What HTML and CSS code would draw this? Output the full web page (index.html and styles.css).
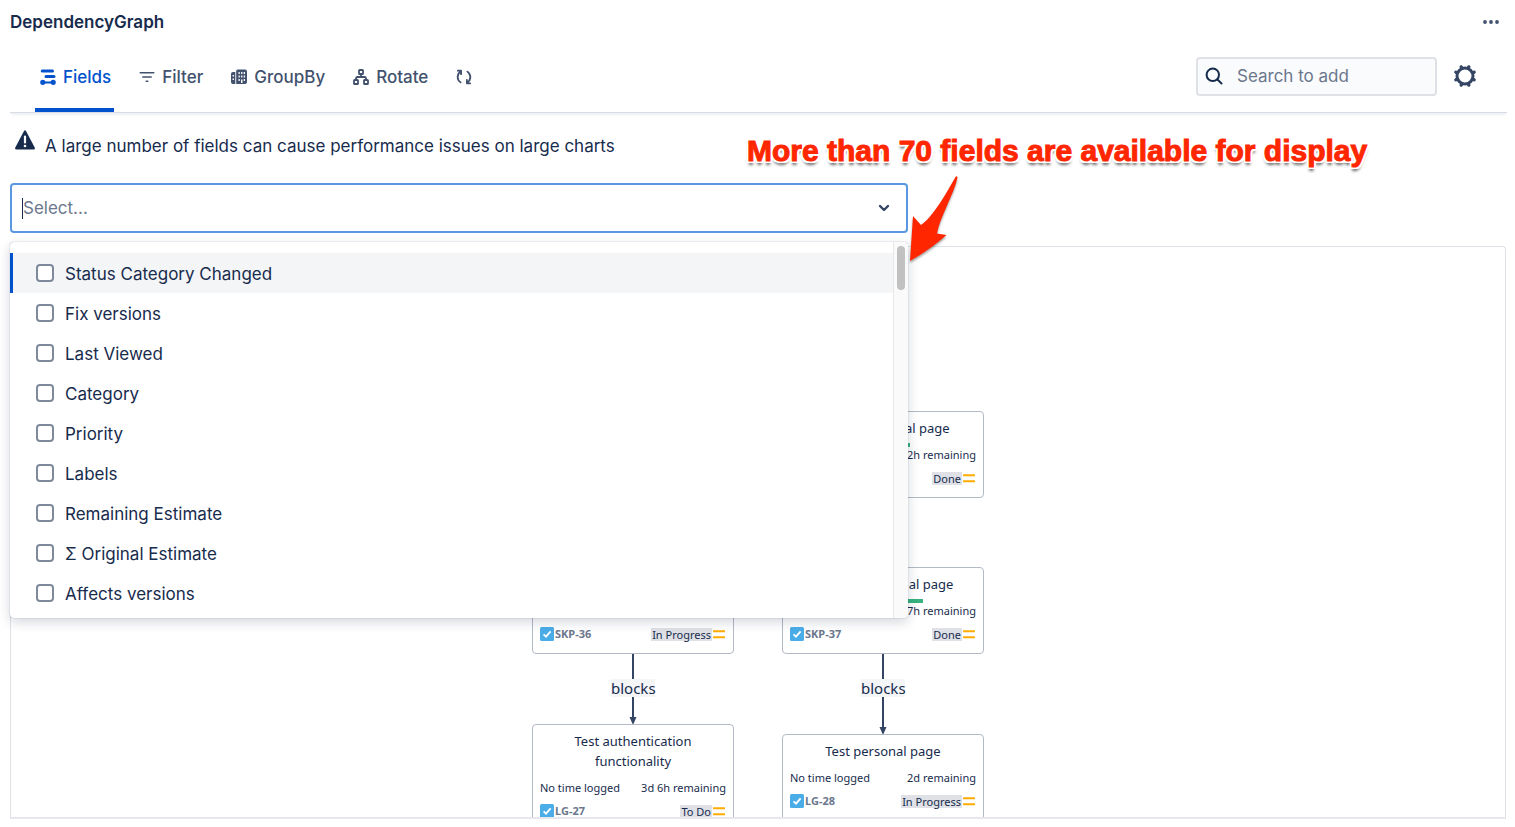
FILE: index.html
```html
<!DOCTYPE html>
<html lang="en">
<head>
<meta charset="utf-8">
<title>DependencyGraph</title>
<link rel="stylesheet" href="styles.css">
</head>
<body>
<svg class="sprite" aria-hidden="true">
  <symbol id="task" viewBox="0 0 14 14"><rect width="14" height="14" rx="1.5" fill="#4bade8"/><path d="M3.6 7.3 6 9.7l4.6-5.4" fill="none" stroke="#fff" stroke-width="1.8"/></symbol>
  <symbol id="medium" viewBox="0 0 12 9"><path d="M.8 1.2h10.4M.8 7.2h10.4" stroke="#ffab00" stroke-width="2" stroke-linecap="round"/></symbol>
</svg>
<header class="titlebar">
  <h1 class="title">DependencyGraph</h1>
  <button class="icon-button" aria-label="More actions"><svg width="16" height="4" viewBox="0 0 16 4" fill="#42526e"><circle cx="2" cy="2" r="1.9"/><circle cx="8" cy="2" r="1.9"/><circle cx="14" cy="2" r="1.9"/></svg></button>
</header>
<div class="toolbar">
  <nav class="tabs" aria-label="Graph options">
    <button class="tab tab-active"><svg width="16" height="16" viewBox="0 0 16 16" fill="none" stroke="currentColor" stroke-width="3" stroke-linecap="round"><path d="M2.200 2h10.300M6 7.600h8"/><path d="M3 13.500h10" stroke-width="1.800"/><circle cx="2.800" cy="13.300" r="1.500" stroke-width="2.200"/><circle cx="13.200" cy="13.300" r="1.500" stroke-width="2.200"/></svg>Fields</button>
    <button class="tab"><svg width="16" height="16" viewBox="0 0 16 16" fill="none" stroke="currentColor" stroke-width="1.500" stroke-linecap="round"><path d="M1.200 3.800h13.600M3.800 8h8.400M7.200 12.200h1.600"/></svg>Filter</button>
    <button class="tab"><svg width="16" height="16" viewBox="0 0 16 16"><path fill="currentColor" fill-rule="evenodd" d="M0 5q0-2 2-2h2.300v12H2q-2 0-2-2zM5.200 2q0-1.500 1.500-1.500H14q2 0 2 2V13q0 2-2 2H5.200zM7.500 3v2h1.300V3zm2.600 0v2h1.300V3zm2.600 0v2H14V3zM7.500 6.500v2h1.300v-2zm2.600 0v2h1.300v-2zm2.600 0v2H14v-2zM7.500 10v2h1.300v-2zm5.200 0v2H14v-2zM10 10.500V14h1.500v-3.500zM1.600 6v1.500H3V6zm0 3.500V11H3V9.500z"/></svg>GroupBy</button>
    <button class="tab"><svg width="16" height="16" viewBox="0 0 16 16" fill="none" stroke="currentColor" stroke-width="1.800"><rect x="6" y="1" width="4" height="4" rx=".6"/><rect x="1" y="11" width="4" height="4" rx=".6"/><rect x="11" y="11" width="4" height="4" rx=".6"/><path d="M8 5v3M3 11V9.500Q3 8 4.500 8h7Q13 8 13 9.500V11"/></svg>Rotate</button>
    <button class="tab" aria-label="Refresh"><svg width="16" height="16" viewBox="0 0 16 16" fill="none" stroke="currentColor" stroke-width="1.800" stroke-linecap="round" stroke-linejoin="round"><path d="M4.600 13.400C.7 10.500.6 5.500 4.700 2.400M1.800 1.700h3.300v3.500M11.400 2.600c3.900 2.900 4 7.900-.1 11M14.200 14.300h-3.300v-3.500"/></svg></button>
  </nav>
  <div class="tools">
    <label class="search"><svg width="18" height="18" viewBox="0 0 18 18" fill="none" stroke="#172b4d" stroke-width="2" stroke-linecap="round"><circle cx="7.800" cy="7.800" r="6.200"/><path d="m12.500 12.500 4 4"/></svg><input type="text" placeholder="Search to add" aria-label="Search to add"></label>
    <button class="icon-button" aria-label="Settings"><svg width="24" height="24" viewBox="0 0 24 24" fill="none" stroke="#344563"><circle cx="12" cy="12" r="8" stroke-width="3"/><path d="m15.800 2.900-.4.900M8.200 2.900l.4.900M2.900 8.200l.9.400M2.900 15.800l.9-.4M8.200 21.100l.4-.9M15.800 21.100l-.4-.9M21.100 15.800l-.9-.4M21.100 8.200l-.9.400" stroke-width="3.400" stroke-linecap="round"/></svg></button>
  </div>
</div>
<main class="content">
  <p class="warning"><svg width="20" height="20" viewBox="0 0 20 20"><path d="M9 1q1-1.600 2 0l8.700 16.500q.8 2-1.200 2h-17q-2 0-1.200-2z" fill="#172b4d"/><path d="M10 6.500v6" stroke="#fff" stroke-width="2.200" stroke-linecap="round"/><circle cx="10" cy="16" r="1.300" fill="#fff"/></svg><span>A large number of fields can cause performance issues on large charts</span></p>
  <div class="picker">
    <div class="select">
      <span class="caret"></span>
      <input type="text" placeholder="Select..." aria-label="Select fields">
      <svg width="12" height="8" viewBox="0 0 12 8" fill="none" stroke="#344563" stroke-width="2.400" stroke-linecap="round" stroke-linejoin="round"><path d="m2 2 4 4 4-4"/></svg>
    </div>
    <div class="menu">
      <div class="options">
        <label class="option option-focused"><input type="checkbox">Status Category Changed</label>
        <label class="option"><input type="checkbox">Fix versions</label>
        <label class="option"><input type="checkbox">Last Viewed</label>
        <label class="option"><input type="checkbox">Category</label>
        <label class="option"><input type="checkbox">Priority</label>
        <label class="option"><input type="checkbox">Labels</label>
        <label class="option"><input type="checkbox">Remaining Estimate</label>
        <label class="option"><input type="checkbox">Σ Original Estimate</label>
        <label class="option"><input type="checkbox">Affects versions</label>
      </div>
      <div class="track"><div class="thumb"></div></div>
    </div>
    <div class="callout">More than 70 fields are available for display</div>
    <svg class="arrow" width="44" height="92" viewBox="0 0 44 92"><path d="M48.500 3q1.500-1.500 2 .5C47 20 33 43 30 59.500L39.500 61Q24 75 3 87L6 42l8 9C26 43 40 18 48.500 3z" fill="#ff2600"/></svg>
  </div>
  <section class="graph" aria-label="Dependency graph">
    <div class="canvas">
      <svg class="edges" width="452" height="580" viewBox="0 0 452 580" fill="#344563"><path d="M100 406h2v64h-2zM97.500 470h7l-3.500 8zM350 406h2v74h-2zM347.500 480h7l-3.500 8z"/></svg>
      <span class="edge-label edge-left">blocks</span>
      <span class="edge-label edge-right">blocks</span>
      <article class="node node-design">
        <h2>Design personal page</h2>
        <div class="progress"><i></i></div>
        <p class="row"><span>6h logged</span><span>2h remaining</span></p>
        <p class="row"><span class="key"><svg width="14" height="14"><use href="#task"/></svg>SKP-35</span><span class="state"><b>Done</b><svg width="12" height="9"><use href="#medium"/></svg></span></p>
      </article>
      <article class="node node-auth">
        <h2>Authentication</h2>
        <div class="progress"><i></i></div>
        <p class="row"><span>4h logged</span><span>6h remaining</span></p>
        <p class="row"><span class="key"><svg width="14" height="14"><use href="#task"/></svg>SKP-36</span><span class="state"><b>In Progress</b><svg width="12" height="9"><use href="#medium"/></svg></span></p>
      </article>
      <article class="node node-personal">
        <h2>Develop personal page</h2>
        <div class="progress progress-wide"><i></i></div>
        <p class="row"><span>2d 4h logged</span><span>7h remaining</span></p>
        <p class="row"><span class="key"><svg width="14" height="14"><use href="#task"/></svg>SKP-37</span><span class="state"><b>Done</b><svg width="12" height="9"><use href="#medium"/></svg></span></p>
      </article>
      <article class="node node-test-auth">
        <h2>Test authentication functionality</h2>
        <div class="progress"></div>
        <p class="row"><span>No time logged</span><span>3d 6h remaining</span></p>
        <p class="row"><span class="key"><svg width="14" height="14"><use href="#task"/></svg>LG-27</span><span class="state"><b>To Do</b><svg width="12" height="9"><use href="#medium"/></svg></span></p>
      </article>
      <article class="node node-test-personal">
        <h2>Test personal page</h2>
        <div class="progress"></div>
        <p class="row"><span>No time logged</span><span>2d remaining</span></p>
        <p class="row"><span class="key"><svg width="14" height="14"><use href="#task"/></svg>LG-28</span><span class="state"><b>In Progress</b><svg width="12" height="9"><use href="#medium"/></svg></span></p>
      </article>
    </div>
  </section>
</main>
</body>
</html>
```
FILE: styles.css
```css
* { box-sizing: border-box; }
body {
  margin: 0;
  padding: 0 8px 8px 10px;
  height: 100vh;
  display: flex;
  flex-direction: column;
  overflow: hidden;
  background: #fff;
  color: #172b4d;
  font: 17px/24px Inter, "Noto Sans", sans-serif;
}
h1, h2, p { margin: 0; }
button, input { font: inherit; color: inherit; }
button { border: 0; padding: 0; background: none; }
svg { display: block; flex: none; }
.sprite { position: absolute; width: 0; height: 0; }

.titlebar { display: flex; justify-content: space-between; align-items: center; padding: 10px 8px 8px 0; }
.title { font-size: 17px; font-weight: 600; line-height: 24px; }
.icon-button { display: flex; }

.toolbar {
  display: flex;
  justify-content: space-between;
  height: 71px;
  padding: 0 30px 0 25px;
  border-bottom: 1px solid #d8dbe3;
  box-shadow: 0 3px 2px -1px #eeeff3;
}
.tabs { display: flex; gap: 20px; }
.tab {
  display: flex;
  align-items: center;
  gap: 7px;
  padding: 4px 3px 0 5px;
  border-bottom: 4px solid transparent;
  color: #42526e;
  font-weight: 500;
}
.tab-active { color: #0052cc; border-color: #0052cc; }
.tools { display: flex; align-items: center; gap: 16px; padding-bottom: 2px; }
.search {
  display: flex;
  align-items: center;
  gap: 14px;
  width: 241px;
  height: 39px;
  padding: 0 7px;
  border: 2px solid #dfe1e6;
  border-radius: 4px;
  background: #fafbfc;
}
.search input, .select input { flex: 1; min-width: 0; border: 0; padding: 0; background: none; outline: 0; }
input::placeholder { color: #6b778c; opacity: 1; }

.content { flex: 1; min-height: 0; display: flex; flex-direction: column; }
.warning { display: flex; align-items: flex-start; gap: 10px; padding: 17px 0 25px 5px; }
.warning span { padding-top: 4px; }

.picker { position: relative; z-index: 1; width: 60%; margin-bottom: 13px; }
.select {
  display: flex;
  align-items: center;
  height: 50px;
  padding: 0 16px 0 10px;
  border: 2px solid #5a97e2;
  border-radius: 4px;
  background: #fff;
}
.caret { width: 1px; height: 21px; background: #172b4d; }
.menu {
  position: absolute;
  top: 59px;
  left: 0;
  right: 0;
  display: flex;
  border-radius: 4px;
  background: #fff;
  box-shadow: 0 0 1px rgba(9, 30, 66, .5), 0 4px 12px rgba(9, 30, 66, .18);
  overflow: hidden;
}
.options { flex: 1; padding: 11px 0 5px; }
.option { display: flex; align-items: center; gap: 11px; height: 40px; padding: 2px 0 0 23px; border-left: 3px solid transparent; }
.option-focused { background: #f4f5f7; border-color: #0052cc; }
.option input {
  appearance: none;
  width: 18px;
  height: 18px;
  margin: 0 0 2px;
  border: 2px solid #7f899c;
  border-radius: 4px;
  background: #fff;
}
.track { width: 15px; padding: 4px 3px; border-left: 1px solid #e8e8e8; background: #fafafa; }
.thumb { height: 44px; border-radius: 4px; background: #c1c1c1; }

.callout {
  position: absolute;
  left: 737px;
  top: -49px;
  white-space: nowrap;
  color: #ff2600;
  font: bold 30px/34px "Liberation Sans", Arial, sans-serif;
  -webkit-text-stroke: 1px #ff2600;
  text-shadow: 2px 0 #fff, -2px 0 #fff, 0 2px #fff, 0 -2px #fff, 2px 2px #fff, -2px 2px #fff, 2px -2px #fff, -2px -2px #fff, 0 4px 3px rgba(0, 0, 0, .6);
}
.arrow { position: absolute; left: 897px; top: -9px; overflow: visible; filter: drop-shadow(0 2px 1px rgba(0, 0, 0, .35)); }

.graph {
  flex: 1;
  min-height: 0;
  position: relative;
  overflow: hidden;
  margin-right: 1px;
  border: 1px solid #dfe1e6;
  border-bottom: 2px solid #e7e8ee;
  border-radius: 4px 4px 0 0;
  font-family: "Noto Sans", sans-serif;
}
.canvas { position: absolute; top: 0; left: 50%; width: 452px; margin-left: -226px; }
.edges { position: absolute; top: 0; left: 0; }
.edge-label { position: absolute; top: 432px; width: 44px; margin-left: -22px; text-align: center; background: #f4f5f7; font-size: 15px; line-height: 18px; }
.edge-left { left: 101px; }
.edge-right { left: 351px; }
.node {
  position: absolute;
  width: 202px;
  height: 87px;
  padding: 6px 7px 0;
  border: 1px solid #b3bac5;
  border-radius: 4px;
  background: #fff;
  font-size: 11px;
  line-height: 16px;
}
.node h2 { font-size: 13px; line-height: 20px; font-weight: 400; text-align: center; padding: 0 20px; }
.progress { height: 9px; padding-top: 5px; }
.progress i { display: block; width: 120px; height: 4px; background: #36b37e; }
.progress-wide i { width: 133px; }
.row { display: flex; justify-content: space-between; margin-bottom: 7px; }
.key, .state { display: flex; align-items: center; gap: 1px; }
.key { color: #6b778c; font-weight: 700; }
.state { padding-right: 1px; }
.state b { font-weight: 400; line-height: 13px; padding: 0 1px; background: #dfe1e6; }
.node-design { left: 250px; top: 164px; }
.node-auth { left: 0; top: 320px; }
.node-personal { left: 250px; top: 320px; }
.node-test-auth { left: 0; top: 477px; height: 106px; }
.node-test-personal { left: 250px; top: 487px; }
```
